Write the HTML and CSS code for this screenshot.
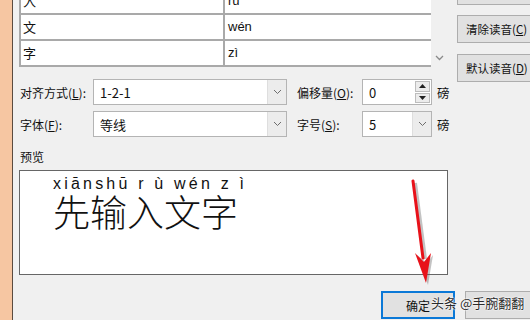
FILE: index.html
```html
<!DOCTYPE html>
<html lang="zh">
<head>
<meta charset="utf-8">
<link rel="stylesheet" href="styles.css">
</head>
<body>
<div class="app">
  <div class="strip"></div>
  <div class="dialog">
    <div class="top">
      <div class="grid">
        <div class="rows">
          <div class="row"><div class="c1">入</div><div class="c2">rù</div></div>
          <div class="row"><div class="c1">文</div><div class="c2">wén</div></div>
          <div class="row"><div class="c1">字</div><div class="c2">zì</div></div>
        </div>
      </div>
      <div class="scroll">
        <svg width="9" height="6" viewBox="0 0 9 6"><path d="M1 1 L4.5 4.5 L8 1" fill="none" stroke="#8a8a8a" stroke-width="1.3"/></svg>
      </div>
      <div class="side">
        <div class="btn ghost"></div>
        <div class="btn">清除读音(<u>C</u>)</div>
        <div class="btn">默认读音(<u>D</u>)</div>
      </div>
    </div>

    <div class="form">
      <div class="frow">
        <div class="lbl">对齐方式(<u>L</u>):</div>
        <div class="combo wide"><span class="val">1-2-1</span><span class="drop"><svg width="9" height="6" viewBox="0 0 9 6"><path d="M1 1 L4.5 4.5 L8 1" fill="none" stroke="#6d6d6d" stroke-width="1"/></svg></span></div>
        <div class="lbl2">偏移量(<u>O</u>):</div>
        <div class="combo small"><span class="val">0</span><span class="spin"><span class="sb"><svg width="7" height="4" viewBox="0 0 7 4"><path d="M0 4 L3.5 0 L7 4Z" fill="#222"/></svg></span><span class="sb"><svg width="7" height="4" viewBox="0 0 7 4"><path d="M0 0 L3.5 4 L7 0Z" fill="#222"/></svg></span></span></div>
        <div class="unit">磅</div>
      </div>
      <div class="frow">
        <div class="lbl">字体(<u>F</u>):</div>
        <div class="combo wide"><span class="val">等线</span><span class="drop"><svg width="9" height="6" viewBox="0 0 9 6"><path d="M1 1 L4.5 4.5 L8 1" fill="none" stroke="#6d6d6d" stroke-width="1"/></svg></span></div>
        <div class="lbl2">字号(<u>S</u>):</div>
        <div class="combo small"><span class="val">5</span><span class="drop"><svg width="9" height="6" viewBox="0 0 9 6"><path d="M1 1 L4.5 4.5 L8 1" fill="none" stroke="#6d6d6d" stroke-width="1"/></svg></span></div>
        <div class="unit">磅</div>
      </div>
    </div>

    <div class="plabel">预览</div>
    <div class="preview">
      <div class="pinyin">xiānshū r ù wén z ì</div>
      <div class="hanzi">先输入文字</div>
    </div>

    <div class="actions">
      <div class="btn ok">确定</div>
      <div class="btn cancel"></div>
    </div>
  </div>
</div>

<svg class="arrow" width="530" height="320" viewBox="0 0 530 320">
  <g transform="translate(2,1)" opacity="0.35">
    <line x1="413" y1="182" x2="423" y2="258" stroke="#555" stroke-width="4"/>
    <path d="M415 254 L425 262 L431 254 L426 284 Z" fill="#555"/>
  </g>
  <line x1="413" y1="181" x2="423" y2="258" stroke="#e8121a" stroke-width="3" stroke-linecap="round"/>
  <path d="M415 253 L424 262 L431 253 L426 283 Z" fill="#e8121a"/>
</svg>
<div class="mark">头条 @手腕翻翻</div>
</body>
</html>
```

FILE: styles.css
```css
* { box-sizing: border-box; }
html, body { margin: 0; padding: 0; }
body {
  width: 530px;
  height: 320px;
  overflow: hidden;
  font-family: "Noto Sans CJK SC", "Liberation Sans", sans-serif;
  font-size: 12px;
  color: #111;
  position: relative;
}
u { text-decoration: underline; text-underline-offset: 1px; }

.app { display: flex; height: 320px; }
.strip {
  width: 13px;
  flex: none;
  background: #f6c6a2;
  border-right: 1px solid #5b4b40;
}
.dialog {
  flex: 1;
  background: #f0f0f0;
  padding-left: 6px;
  display: flex;
  flex-direction: column;
  min-width: 0;
}

/* top table */
.top { display: flex; align-items: flex-start; height: 67px; }
.grid {
  width: 412px;
  height: 67px;
  overflow: hidden;
  flex: none;
}
.rows { margin-top: -11px; border-left: 2px solid #a9a9a9; }
.row {
  display: flex;
  height: 26px;
  border-bottom: 2px solid #a9a9a9;
  background: #fff;
}
.c1 {
  width: 204px;
  border-right: 2px solid #a9a9a9;
  padding-left: 2px;
  font-size: 13px;
  line-height: 24px;
}
.c2 {
  flex: 1;
  padding-left: 3px;
  font-family: "Liberation Sans", sans-serif;
  font-size: 13px;
  line-height: 24px;
}
.scroll {
  width: 17px;
  height: 67px;
  flex: none;
  display: flex;
  justify-content: center;
  align-items: flex-start;
  padding-top: 55px;
}
.side {
  margin-left: 9px;
  display: flex;
  flex-direction: column;
  gap: 11px;
  flex: none;
}
.btn {
  height: 28px;
  background: #e1e1e1;
  border: 1px solid #adadad;
  display: flex;
  align-items: center;
  font-size: 12px;
  white-space: nowrap;
}
.side .btn { width: 80px; padding-left: 8px; font-size: 11.5px; }
.side .ghost { margin-top: -23px; margin-bottom: -1px; }

/* form */
.form {
  margin-top: 12px;
  display: flex;
  flex-direction: column;
  gap: 6px;
}
.frow { display: flex; align-items: center; height: 26px; }
.lbl { width: 74px; padding-left: 1px; }
.lbl2 { width: 65px; margin-left: 10px; }
.combo {
  height: 26px;
  background: #fff;
  border: 1px solid #b4b4b4;
  display: flex;
  align-items: center;
}
.combo .val { flex: 1; padding-left: 6px; font-size: 13px; }
.wide { width: 194px; }
.small { width: 70px; }
.drop {
  width: 19px;
  height: 24px;
  background: #ececec;
  border-left: 1px solid #dedede;
  display: flex;
  align-items: center;
  justify-content: center;
}
.spin {
  width: 15px;
  height: 24px;
  margin-right: 1px;
  display: flex;
  flex-direction: column;
  gap: 1px;
  padding: 1px 0;
}
.sb {
  flex: 1;
  background: #ececec;
  border: 1px solid #bdbdbd;
  display: flex;
  align-items: center;
  justify-content: center;
}
.unit { margin-left: 5px; font-size: 12.5px; }

/* preview */
.plabel { margin-top: 12px; height: 16px; line-height: 16px; padding-left: 1px; }
.preview {
  margin-top: 5px;
  width: 429px;
  height: 105px;
  background: #fff;
  border: 1px solid #666;
  padding-left: 33px;
  padding-top: 4px;
}
.pinyin {
  font-family: "Liberation Sans", sans-serif;
  font-size: 16px;
  letter-spacing: 3.2px;
  white-space: pre;
  line-height: 18px;
}
.hanzi {
  font-size: 37px;
  line-height: 38px;
  margin-top: -1px;
  font-weight: 300;
}

/* actions */
.actions {
  margin-top: 16px;
  display: flex;
  gap: 10px;
  padding-left: 362px;
}
.actions .btn { flex: none; }
.ok { width: 74px; border: 2px solid #0a78d7; padding-left: 23px; }
.cancel { width: 80px; }

.arrow { position: absolute; left: 0; top: 0; pointer-events: none; }
.mark {
  position: absolute;
  left: 431px;
  top: 293px;
  font-size: 13px;
  color: #2b2b2b;
  white-space: nowrap;
  text-shadow: 0 0 2px #fff, 0 0 2px #fff, 0 0 1px #fff;
}
```
